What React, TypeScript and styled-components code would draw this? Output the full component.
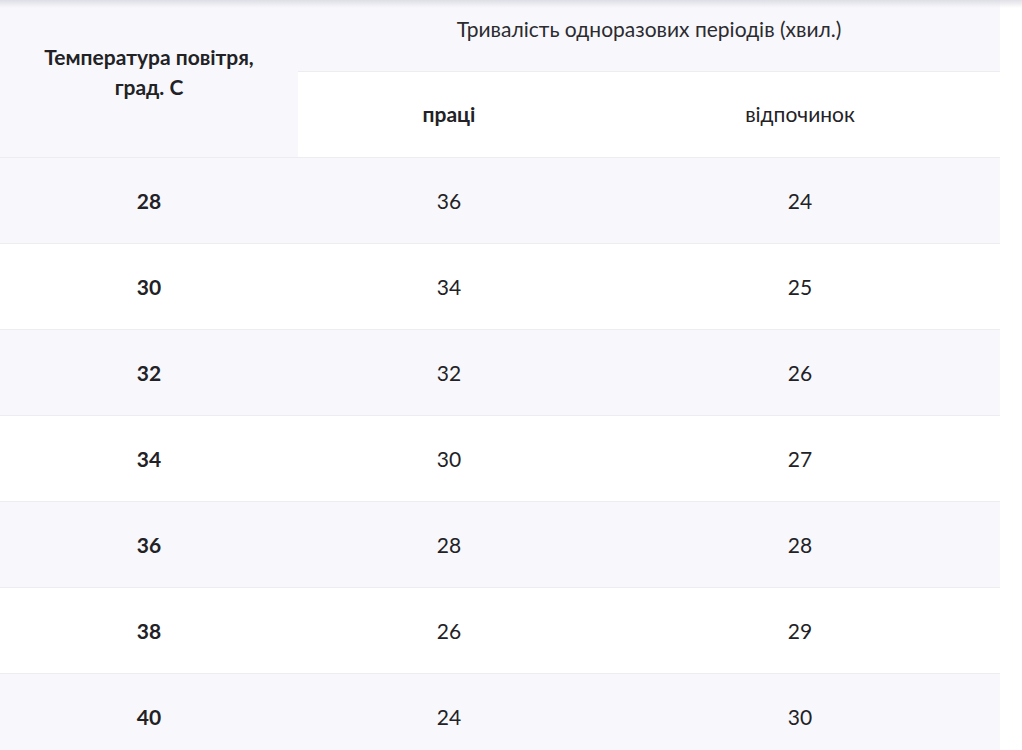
import React from "react";
import styled, { createGlobalStyle } from "styled-components";

const Global = createGlobalStyle`
  html, body { margin: 0; padding: 0; background: #ffffff; }
  body { font-family: Lato, "Noto Sans", sans-serif; color: #222226; }
  *, *::before, *::after { box-sizing: border-box; }
`;

const Wrapper = styled.div`
  position: relative;
  width: 1022px;
  &::before {
    content: "";
    position: absolute;
    left: 0;
    right: 0;
    top: 0;
    height: 8px;
    background: linear-gradient(to bottom, rgba(200, 200, 212, 0.55), rgba(230, 230, 240, 0));
    pointer-events: none;
    z-index: 2;
  }
`;

const Table = styled.table`
  width: 1000px;
  border-collapse: collapse;
  table-layout: fixed;
`;

const HeadRow = styled.tr<{ $h: number }>`
  height: ${(p) => p.$h}px;
`;

const Th = styled.th<{ $tone?: "light" | "white"; $bold?: boolean }>`
  background: ${(p) => (p.$tone === "white" ? "#ffffff" : "#f8f8fc")};
  font-weight: ${(p) => (p.$bold ? 700 : 400)};
  font-size: 21px;
  line-height: 30px;
  text-align: center;
  padding: 0;
  color: #222226;
`;

const CornerHead = styled(Th)`
  padding: 0 40px 12px;
  vertical-align: middle;
  border-bottom: 1px solid #ececf1;
`;

const GroupHead = styled(Th)`
  vertical-align: top;
  padding-top: 14px;
  color: #2b2b30;
`;

const SubHead = styled(Th)`
  border-top: 1px solid #ececf1;
  border-bottom: 1px solid #ececf1;
  vertical-align: middle;
`;

const Row = styled.tr<{ $odd: boolean }>`
  background: ${(p) => (p.$odd ? "#f8f8fc" : "#ffffff")};
  height: 86px;
  border-bottom: 1px solid #ececf1;
`;

const Td = styled.td<{ $bold?: boolean }>`
  text-align: center;
  vertical-align: middle;
  font-size: 21px;
  font-weight: ${(p) => (p.$bold ? 700 : 400)};
  color: #222226;
  padding: 0;
`;

const rows = [
  [28, 36, 24],
  [30, 34, 25],
  [32, 32, 26],
  [34, 30, 27],
  [36, 28, 28],
  [38, 26, 29],
  [40, 24, 30],
];

export default function App() {
  return (
    <>
      <Global />
      <Wrapper>
        <Table>
          <colgroup>
            <col style={{ width: 298 }} />
            <col style={{ width: 302 }} />
            <col style={{ width: 400 }} />
          </colgroup>
          <thead>
            <HeadRow $h={71}>
              <CornerHead rowSpan={2} $bold>
                Температура повітря, град. С
              </CornerHead>
              <GroupHead colSpan={2}>Тривалість одноразових періодів (хвил.)</GroupHead>
            </HeadRow>
            <HeadRow $h={86}>
              <SubHead $tone="white" $bold>
                праці
              </SubHead>
              <SubHead $tone="white">відпочинок</SubHead>
            </HeadRow>
          </thead>
          <tbody>
            {rows.map((r, i) => (
              <Row key={r[0]} $odd={i % 2 === 0}>
                <Td $bold>{r[0]}</Td>
                <Td>{r[1]}</Td>
                <Td>{r[2]}</Td>
              </Row>
            ))}
          </tbody>
        </Table>
      </Wrapper>
    </>
  );
}
